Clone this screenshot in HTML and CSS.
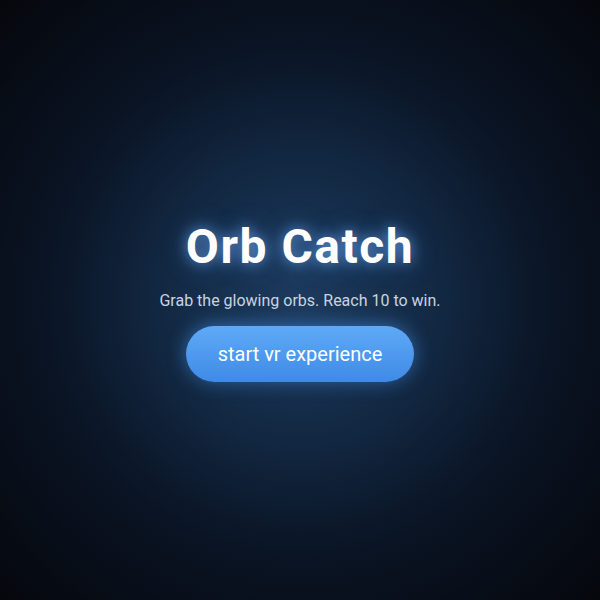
FILE: index.html
```html
<!DOCTYPE html>
<html lang="en">
<head>
    <meta charset="UTF-8">
    <title>Orb Catch</title>
    <link rel="stylesheet" href="styles.css">
</head>
<body>
    <div class="splash">
        <h1 class="title">Orb Catch</h1>
        <p class="subtitle">Grab the glowing orbs. Reach 10 to win.</p>
        <button class="start-btn">start vr experience</button>
    </div>
</body>
</html>
```

FILE: styles.css
```css
* {
    margin: 0;
    padding: 0;
    box-sizing: border-box;
}

html, body {
    height: 100%;
}

body {
    font-family: Roboto, "Noto Sans", sans-serif;
    background: radial-gradient(circle at 50% 50%, #1d3b5e 0%, #132a45 30%, #0a1424 60%, #05070c 100%);
    color: white;
}

.splash {
    height: 100%;
    display: flex;
    flex-direction: column;
    align-items: center;
    justify-content: center;
}

.title {
    font-size: 48px;
    font-weight: 700;
    letter-spacing: 1.5px;
    line-height: 56px;
    text-shadow: 0 0 14px rgba(120, 180, 255, 0.75), 0 0 28px rgba(80, 150, 255, 0.4);
}

.subtitle {
    margin-top: 16px;
    font-size: 16px;
    color: #c9d4e2;
}

.start-btn {
    margin-top: 16px;
    width: 228px;
    height: 56px;
    border: none;
    border-radius: 28px;
    background: linear-gradient(180deg, #5eaaf7 0%, #3f8ae6 100%);
    color: white;
    font-family: inherit;
    font-size: 20px;
    cursor: pointer;
    box-shadow: 0 0 18px rgba(74, 150, 245, 0.65), 0 4px 10px rgba(0, 0, 0, 0.3);
}
```
